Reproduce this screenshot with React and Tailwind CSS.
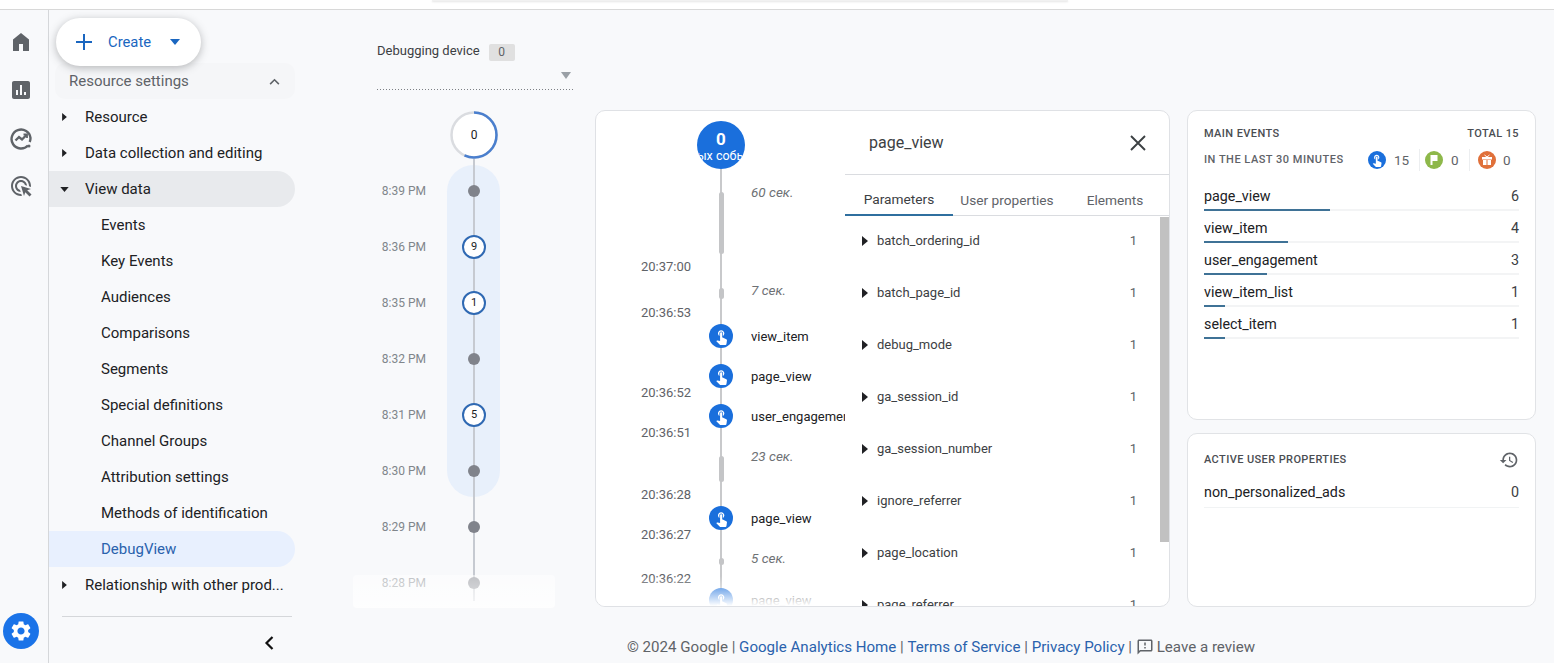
import React from "react";

const TOUCH = "M9 11.24V7.5C9 6.12 10.12 5 11.5 5S14 6.12 14 7.5v3.74c1.21-.81 2-2.18 2-3.74C16 5.01 13.99 3 11.5 3S7 5.01 7 7.5c0 1.56.79 2.93 2 3.74zm9.84 4.63l-4.54-2.26c-.17-.07-.35-.11-.54-.11H13v-6c0-.83-.67-1.5-1.5-1.5S10 6.67 10 7.5v10.74l-3.43-.72c-.08-.01-.15-.03-.24-.03-.31 0-.59.13-.79.33l-.79.8 4.94 4.94c.27.27.65.44 1.06.44h6.79c.75 0 1.33-.55 1.44-1.28l.75-5.27c.01-.07.02-.14.02-.2 0-.62-.38-1.16-.91-1.38z";
const GEAR = "M19.14 12.94c.04-.3.06-.61.06-.94 0-.32-.02-.64-.07-.94l2.03-1.58c.18-.14.23-.41.12-.61l-1.92-3.32c-.12-.22-.37-.29-.59-.22l-2.39.96c-.5-.38-1.03-.7-1.62-.94l-.36-2.54c-.04-.24-.24-.41-.48-.41h-3.84c-.24 0-.43.17-.47.41l-.36 2.54c-.59.24-1.13.57-1.62.94l-2.39-.96c-.22-.08-.47 0-.59.22L2.74 8.87c-.12.21-.08.47.12.61l2.03 1.58c-.05.3-.09.63-.09.94s.02.64.07.94l-2.03 1.58c-.18.14-.23.41-.12.61l1.92 3.32c.12.22.37.29.59.22l2.39-.96c.5.38 1.03.7 1.62.94l.36 2.54c.05.24.24.41.48.41h3.84c.24 0 .44-.17.47-.41l.36-2.54c.59-.24 1.13-.56 1.62-.94l2.39.96c.22.08.47 0 .59-.22l1.92-3.32c.12-.22.07-.47-.12-.61l-2.01-1.58zM12 15.6c-1.98 0-3.6-1.62-3.6-3.6s1.62-3.6 3.6-3.6 3.6 1.62 3.6 3.6-1.62 3.6-3.6 3.6z";

const Svg = ({ d, className }) => (
  <svg viewBox="0 0 24 24" className={className} fill="currentColor"><path d={d} /></svg>
);

const CaretDown = ({ className }) => (
  <svg viewBox="0 0 10 6" className={className} fill="currentColor"><path d="M0 0h10L5 6z" /></svg>
);

const CaretRight = ({ className }) => (
  <svg viewBox="0 0 6 10" className={className} fill="currentColor"><path d="M0 0l6 5-6 5z" /></svg>
);

function Rail() {
  return (
    <div className="w-[49px] shrink-0 border-r border-[#d5d7da] flex flex-col items-center text-[#5f6368] pr-[6px]">
      <div className="h-[24px] mt-[20px]">
        <Svg className="w-6 h-6" d="M4 21V9.5L12 3l8 6.500V21h-6v-7h-4v7z" />
      </div>
      <div className="h-[24px] mt-[24px]">
        <Svg className="w-6 h-6" d="M19 3H5c-1.100 0-2 .9-2 2v14c0 1.100.9 2 2 2h14c1.100 0 2-.9 2-2V5c0-1.100-.9-2-2-2zM9 17H7v-5h2v5zm4 0h-2V7h2v10zm4 0h-2v-3h2v3z" />
      </div>
      <div className="h-[24px] mt-[24px]">
        <svg viewBox="0 0 24 24" className="w-6 h-6" fill="none" stroke="currentColor" strokeWidth="2.400">
          <path d="M19 19.500A9.500 9.500 0 1 1 21.500 12c0 1.500-.3 2.800-.8 4" />
          <path d="M6.500 14.500l3.500-3.500 3 2.500 4.500-4.500" />
          <path d="M14.500 8.500h3.500v3.500" strokeWidth="1.800" />
          <circle cx="20" cy="20" r="1.500" fill="currentColor" stroke="none" />
        </svg>
      </div>
      <div className="h-[24px] mt-[24px]">
        <Svg className="w-6 h-6" d="M11.710 17.990C8.530 17.840 6 15.220 6 12c0-3.310 2.690-6 6-6 3.220 0 5.840 2.530 5.990 5.710l-2.100-.63C15.480 9.310 13.890 8 12 8c-2.210 0-4 1.790-4 4 0 1.890 1.310 3.480 3.080 3.890l.63 2.100zM22 12c0 .3-.01.6-.04.9l-1.970-.59c.01-.1.01-.21.01-.31 0-4.420-3.580-8-8-8s-8 3.580-8 8 3.580 8 8 8c.1 0 .21 0 .31-.01l.59 1.970c-.3.03-.6.04-.9.04-5.520 0-10-4.480-10-10S6.480 2 12 2s10 4.480 10 10zm-3.770 4.260L22 15l-10-3 3 10 1.260-3.770 4.270 4.270 1.980-1.980-4.280-4.260z" />
      </div>
      <div className="mt-auto mb-[14px] w-9 h-9 rounded-full bg-[#1a73e8] flex items-center justify-center text-white shrink-0">
        <Svg className="w-6 h-6" d={GEAR} />
      </div>
    </div>
  );
}

const subItems = ["Events", "Key Events", "Audiences", "Comparisons", "Segments", "Special definitions", "Channel Groups", "Attribution settings", "Methods of identification"];

const NavRow = ({ children }) => (
  <div className="h-9 shrink-0 flex items-center text-[#202124] whitespace-nowrap">
    <span className="w-[36px] pl-[13px] flex items-center">
      <CaretRight className="w-[5px] h-[8px] text-[#202124]" />
    </span>
    {children}
  </div>
);

function Sidebar() {
  return (
    <div className="w-[246px] shrink-0 relative pt-[53px] text-[15px] flex flex-col">
      <div className="absolute left-[7px] top-[8px] w-[145px] h-[48px] rounded-full bg-white shadow-[0_2px_8px_rgba(60,64,67,0.35)] flex items-center pl-[19px] text-[#1a66c0] z-10">
        <svg viewBox="0 0 18 18" className="w-[18px] h-[18px]" fill="none" stroke="currentColor" strokeWidth="2"><path d="M9 1v16M1 9h16" /></svg>
        <span className="ml-[15px] text-[14.800px]">Create</span>
        <CaretDown className="ml-[19px] w-[10px] h-[6px]" />
      </div>
      <div className="h-9 shrink-0 ml-[6px] rounded-[10px] bg-[#f5f6f8] flex items-center pl-[14px] pr-[15px] justify-between text-[#5f6368]">
        <span>Resource settings</span>
        <svg viewBox="0 0 12 8" className="w-[11px] h-[7px]" fill="none" stroke="currentColor" strokeWidth="1.800"><path d="M1 7l5-5 5 5" /></svg>
      </div>
      <NavRow>Resource</NavRow>
      <NavRow>Data collection and editing</NavRow>
      <div className="h-9 shrink-0 flex items-center bg-[#e8eaed] rounded-r-[18px] text-[#202124]">
        <span className="w-[36px] pl-[11px] flex items-center">
          <CaretDown className="w-[9px] h-[5px]" />
        </span>
        View data
      </div>
      {subItems.map((s) => (
        <div key={s} className="h-9 shrink-0 flex items-center pl-[52px] text-[#202124]">{s}</div>
      ))}
      <div className="h-9 shrink-0 flex items-center pl-[52px] bg-[#e8f0fe] rounded-r-[18px] text-[#2a62ad]">DebugView</div>
      <NavRow>Relationship with other prod...</NavRow>
      <div className="mt-[13px] ml-[13px] mr-[3px] border-t border-[#d5d7da] shrink-0" />
      <div className="mt-[18px] ml-[215px] shrink-0">
        <svg viewBox="0 0 10 16" className="w-[10px] h-[16px]" fill="none" stroke="#111" strokeWidth="2.200"><path d="M8.500 2L2.500 8l6 6" /></svg>
      </div>
    </div>
  );
}

const times = [
  ["8:39 PM", 0], ["8:36 PM", 9], ["8:35 PM", 1], ["8:32 PM", 0], ["8:31 PM", 5], ["8:30 PM", 0], ["8:29 PM", 0], ["8:28 PM", 0],
];

function DeviceColumn() {
  return (
    <div className="w-[198px] shrink-0 ml-[82px] mr-[20px] pt-[32px] flex flex-col">
      <div className="flex items-center h-[20px] shrink-0 text-[13px] text-[#3c4043]">
        <span className="mb-[2px]">Debugging device</span>
        <span className="ml-[9px] w-[26px] h-[17px] bg-[#e0e0e0] rounded-[2px] text-[12px] text-[#5f6368] flex items-center justify-center">0</span>
      </div>
      <div className="h-[27px] shrink-0 flex justify-end items-center pr-[4px]">
        <svg viewBox="0 0 10 7" className="w-[10px] h-[7px]" fill="#9aa0a6"><path d="M0 0h10L5 7z" /></svg>
      </div>
      <div className="h-[1px] shrink-0 bg-[repeating-linear-gradient(90deg,#7d8085_0,#7d8085_1px,transparent_1px,transparent_3px)]" />
      <div className="relative mt-[21px] shrink-0">
        <div className="absolute left-[70px] top-[54px] w-[53px] h-[332px] rounded-[27px] bg-[#e8f0fb]" />
        <div className="absolute left-[96px] top-[48px] w-[2px] h-[442px] bg-[#c6cad1]" />
        <div className="relative ml-[73px] w-[48px] h-[48px]">
          <svg viewBox="0 0 48 48" className="w-[48px] h-[48px]">
            <circle cx="24" cy="24" r="22.500" fill="#fff" stroke="#dadce0" strokeWidth="2.500" />
            <circle cx="24" cy="24" r="22.500" fill="none" stroke="#4a7fce" strokeWidth="2.500" strokeDasharray="80 200" transform="rotate(-90 24 24)" />
          </svg>
          <span className="absolute inset-0 flex items-center justify-center text-[12px] text-[#202124]">0</span>
        </div>
        <div className="relative mt-[4px]">
          {times.map(([t, n]) => (
            <div key={t} className="h-[56px] flex items-center">
              <span className="w-[49px] text-right text-[12px] text-[#80868b] whitespace-nowrap">{t}</span>
              <span className="ml-[24px] w-[48px] flex justify-center">
                {n ? (
                  <span className="w-[24px] h-[24px] rounded-full bg-white border-2 border-[#2f69b3] flex items-center justify-center text-[11px] text-[#202124]">{n}</span>
                ) : (
                  <span className="w-[12px] h-[12px] rounded-full bg-[#80838b]" />
                )}
              </span>
            </div>
          ))}
        </div>
        <div className="absolute left-[-24px] top-[464px] w-[202px] h-[33px] bg-gradient-to-b from-[#ffffff80] to-[#ffffffd0] rounded-[4px] pointer-events-none" />
      </div>
    </div>
  );
}

const TouchDot = () => (
  <span className="block w-[24px] h-[24px] rounded-full bg-[#1a6fdc] flex items-center justify-center text-white">
    <Svg className="w-[17px] h-[17px]" d={TOUCH} />
  </span>
);

const rows = [
  { h: "h-[106px]", time: "20:37:00", gap: "60 сек.", barCls: "mt-[23px] h-[62px]", labelCls: "mt-[15px]" },
  { h: "h-[46px]", time: "20:36:53", gap: "7 сек.", barCls: "mt-[13px] h-[11px]", labelCls: "mt-[7px]" },
  { h: "h-[32px]", ev: "view_item", iconCls: "mt-[3px]" },
  { h: "h-[48px]", time: "20:36:52", ev: "page_view", iconCls: "mt-[11px]" },
  { h: "h-[40px]", time: "20:36:51", ev: "user_engagement", iconCls: "mt-[3px]" },
  { h: "h-[62px]", time: "20:36:28", gap: "23 сек.", barCls: "mt-[15px] h-[26px]", labelCls: "mt-[7px]" },
  { h: "h-[40px]", time: "20:36:27", ev: "page_view", iconCls: "mt-[3px]" },
  { h: "h-[44px]", time: "20:36:22", gap: "5 сек.", barCls: "mt-[15px] h-[7px]", labelCls: "mt-[7px]" },
  { h: "h-[26px]", ev: "page_view", iconCls: "mt-[1px]" },
];

function EventTimeline() {
  return (
    <div className="w-[249px] shrink-0 relative overflow-hidden pt-[10px] pl-[45px]">
      <div className="absolute left-[124px] top-[58px] bottom-0 w-[2px] bg-[#c8c9cb]" />
      <div className="relative ml-[56px] w-[48px] h-[48px] rounded-full bg-[#1a6fdc] text-white flex flex-col items-center overflow-hidden">
        <span className="text-[17px] font-bold leading-[20px] mt-[8px]">0</span>
        <span className="text-[12.500px] leading-[13px] whitespace-nowrap">новых событий</span>
      </div>
      {rows.map((r, i) => (
        <div key={i} className={`relative flex ${r.h}`}>
          <span className="w-[50px] self-end text-[13px] leading-[16px] text-[#5f6368] whitespace-nowrap">{r.time}</span>
          <span className="w-[60px] flex justify-center items-start">
            {r.ev ? (
              <span className={r.iconCls}><TouchDot /></span>
            ) : (
              <span className={`w-[5px] rounded-[3px] bg-[#c4c5c7] ${r.barCls}`} />
            )}
          </span>
          {r.ev ? (
            <span className={`flex-1 overflow-hidden whitespace-nowrap text-[13px] leading-[26px] text-[#202124] ${r.iconCls}`}>{r.ev}</span>
          ) : (
            <span className={`flex-1 text-[13.500px] leading-[16px] italic text-[#6e7175] ${r.labelCls}`}>{r.gap}</span>
          )}
        </div>
      ))}
      <div className="absolute left-0 right-0 bottom-0 h-[30px] bg-gradient-to-b from-[#ffffff00] to-[#ffffff] pointer-events-none" />
    </div>
  );
}

const params = ["batch_ordering_id", "batch_page_id", "debug_mode", "ga_session_id", "ga_session_number", "ignore_referrer", "page_location", "page_referrer"];

function ParamPanel() {
  return (
    <div className="flex-1 flex flex-col min-w-0">
      <div className="h-[64px] shrink-0 border-b border-[#dadce0] flex items-center justify-between pl-[24px] pr-[23px]">
        <span className="text-[16px] text-[#3c4043]">page_view</span>
        <svg viewBox="0 0 16 16" className="w-[16px] h-[16px]" fill="none" stroke="#3c4043" strokeWidth="1.900"><path d="M1 1l14 14M15 1L1 15" /></svg>
      </div>
      <div className="h-[41px] shrink-0 grid grid-cols-3 border-b border-[#dadce0] text-[13.700px] text-[#5f6368]">
        <div className="flex items-center justify-center border-b-2 border-[#2f6f9f] text-[#3c4043] mb-[-1px] pt-[10px]">Parameters</div>
        <div className="flex items-center justify-center pt-[10px]">User properties</div>
        <div className="flex items-center justify-center pt-[10px]">Elements</div>
      </div>
      <div className="relative flex-1 overflow-hidden">
        <div className="absolute right-0 top-[1px] w-[9px] h-[325px] bg-[#c1c1c1]" />
        <div className="mt-[-1px]">
          {params.map((p) => (
            <div key={p} className="h-[52px] flex items-center pl-[17px] pr-[32px] text-[13px] text-[#3c4043]">
              <CaretRight className="w-[6px] h-[10px] text-[#202124]" />
              <span className="ml-[9px] flex-1">{p}</span>
              <span className="text-[#5f6368]">1</span>
            </div>
          ))}
        </div>
      </div>
    </div>
  );
}

const events = [
  ["page_view", 6, "w-[126px]"], ["view_item", 4, "w-[84px]"], ["user_engagement", 3, "w-[63px]"], ["view_item_list", 1, "w-[21px]"], ["select_item", 1, "w-[21px]"],
];

function StatIcons() {
  return (
    <div className="flex items-center pr-[8px] text-[13.500px] text-[#5f6368]">
      <span className="w-[18px] h-[18px] rounded-full bg-[#1a6fdc] flex items-center justify-center text-white">
        <Svg className="w-[14px] h-[14px]" d={TOUCH} />
      </span>
      <span className="ml-[8px] w-[16px]">15</span>
      <span className="ml-[9px] w-px h-[22px] bg-[#eceef0]" />
      <span className="ml-[5px] w-[18px] h-[18px] rounded-full bg-[#8eb84a] flex items-center justify-center">
        <svg viewBox="0 0 10 10" className="w-[10px] h-[10px]" fill="#fff"><path d="M1.500 0h7v6h-5v4h-2z" /></svg>
      </span>
      <span className="ml-[8px] w-[8px]">0</span>
      <span className="ml-[10px] w-px h-[22px] bg-[#eceef0]" />
      <span className="ml-[8px] w-[18px] h-[18px] rounded-full bg-[#e0703a] flex items-center justify-center">
        <svg viewBox="0 0 12 12" className="w-[12px] h-[12px]" fill="#fff"><path d="M1 3h10v2.500H1zM2 6h8v5H2z" /><path d="M3.500 1l2.500 2 2.500-2" fill="none" stroke="#fff" strokeWidth="1" /><path d="M5.500 6h1v5h-1z" fill="#e0703a" /></svg>
      </span>
      <span className="ml-[7px] w-[8px]">0</span>
    </div>
  );
}

function RightColumn() {
  return (
    <div className="w-[349px] shrink-0 flex flex-col gap-[13px]">
      <div className="h-[310px] bg-white border border-[#e1e3e6] rounded-[10px] px-[16px] pt-[15px]">
        <div className="flex justify-between text-[11px] leading-[16px] tracking-[0.4px] text-[#4a4d52] font-medium">
          <span>MAIN EVENTS</span><span>TOTAL 15</span>
        </div>
        <div className="mt-[10px] h-[16px] flex items-center justify-between">
          <span className="text-[11px] tracking-[0.5px] text-[#5f6368] font-medium">IN THE LAST 30 MINUTES</span>
          <StatIcons />
        </div>
        <div className="mt-[12px]">
          {events.map(([n, c, w]) => (
            <div key={n} className="h-[32px]">
              <div className="h-[29px] flex items-center justify-between pt-[5px] text-[14.300px] text-[#202124]">
                <span>{n}</span><span className="text-[#3c4043]">{c}</span>
              </div>
              <div className="h-[2px] bg-[#f3f4f5]"><div className={`h-[2px] bg-[#3f7296] ${w}`} /></div>
            </div>
          ))}
        </div>
      </div>
      <div className="h-[174px] bg-white border border-[#e1e3e6] rounded-[10px] px-[16px] pt-[18px]">
        <div className="flex justify-between items-center h-[16px] text-[11px] tracking-[0.4px] text-[#4a4d52] font-medium">
          <span>ACTIVE USER PROPERTIES</span>
          <Svg className="w-[20px] h-[20px] text-[#5f6368]" d="M13 3c-4.970 0-9 4.030-9 9H1l3.890 3.890.07.14L9 12H6c0-3.870 3.130-7 7-7s7 3.130 7 7-3.130 7-7 7c-1.930 0-3.680-.79-4.940-2.060l-1.420 1.420C8.270 19.990 10.510 21 13 21c4.970 0 9-4.030 9-9s-4.030-9-9-9zm-1 5v5l4.280 2.540.72-1.210-3.500-2.080V8H12z" />
        </div>
        <div className="mt-[10px] h-[30px] flex items-center justify-between border-b border-[#f1f3f4] text-[14.300px] text-[#202124]">
          <span>non_personalized_ads</span><span className="text-[#3c4043]">0</span>
        </div>
      </div>
    </div>
  );
}

function Footer() {
  return (
    <div className="ml-[332px] mt-[30px] h-[20px] shrink-0 flex items-center text-[15.100px] text-[#5f6368] whitespace-nowrap">
      <span>© 2024 Google |&nbsp;</span>
      <span className="text-[#2a62ad]">Google Analytics Home</span>
      <span>&nbsp;|&nbsp;</span>
      <span className="text-[#2a62ad]">Terms of Service</span>
      <span>&nbsp;|&nbsp;</span>
      <span className="text-[#2a62ad]">Privacy Policy</span>
      <span>&nbsp;|&nbsp;</span>
      <Svg className="w-[18px] h-[18px] mr-[3px]" d="M20 2H4c-1.100 0-1.990.9-1.990 2L2 22l4-4h14c1.100 0 2-.9 2-2V4c0-1.100-.9-2-2-2zm0 14H5.170L4 17.170V4h16v12zM11 12h2v2h-2zm0-6h2v4h-2z" />
      <span>Leave a review</span>
    </div>
  );
}

export default function App() {
  return (
    <div className="w-[1554px] h-[663px] overflow-hidden flex flex-col bg-[#f8f9fb] font-['Roboto',sans-serif]">
      <div className="h-[10px] shrink-0 bg-white border-b border-[#d8d8d8]">
        <div className="ml-[432px] w-[636px] h-[1px] bg-[#f1f1f1] shadow-[0_1px_2px_rgba(0,0,0,0.15)]" />
      </div>
      <div className="flex-1 flex min-h-0">
        <Rail />
        <Sidebar />
        <div className="flex-1 flex flex-col min-w-0">
          <div className="h-[597px] shrink-0 flex">
            <DeviceColumn />
            <div className="pt-[100px] flex gap-[17px]">
              <div className="w-[575px] bg-white border border-[#dfe1e5] rounded-[10px] overflow-hidden flex">
                <EventTimeline />
                <ParamPanel />
              </div>
              <RightColumn />
            </div>
          </div>
          <Footer />
        </div>
      </div>
    </div>
  );
}
